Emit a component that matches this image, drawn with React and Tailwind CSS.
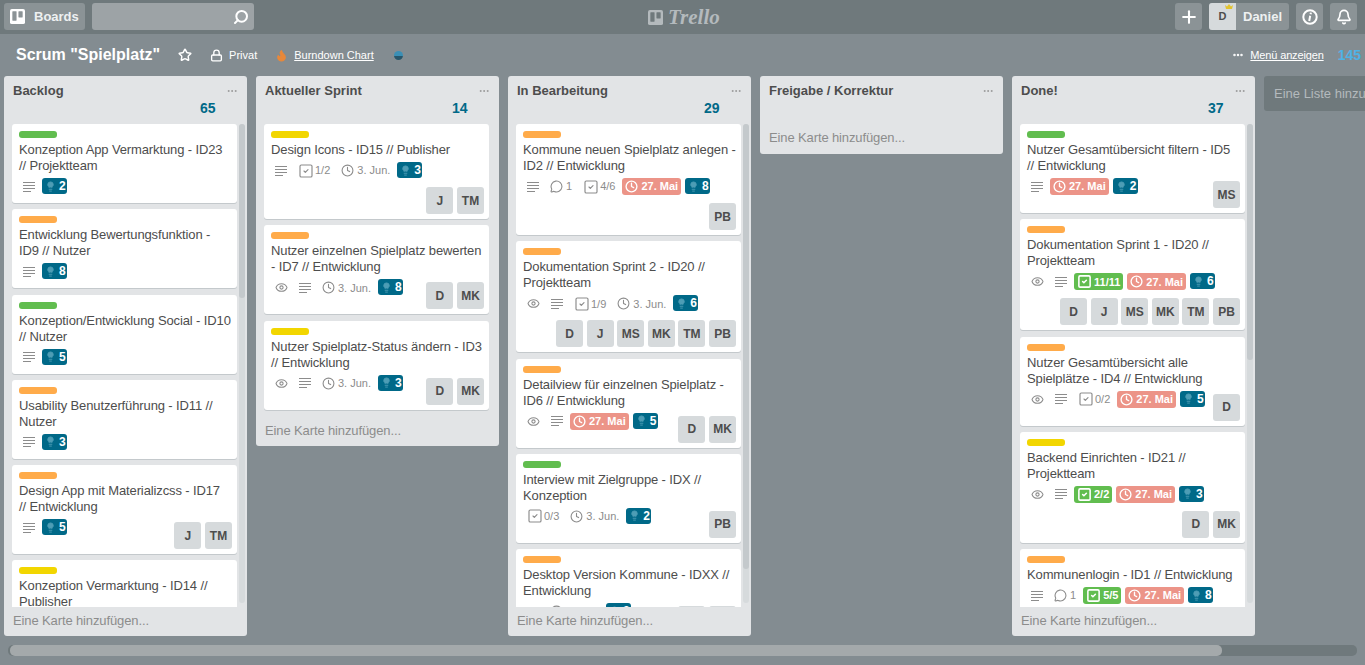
import { Search, Plus, Bell, Star, Lock, Flame, Eye, MessageCircle, SquareCheck, Clock, Lightbulb, Ellipsis } from "lucide-react";

const ORANGE = "bg-[#ffab4a]";
const GREEN = "bg-[#61bd4f]";
const YELLOW = "bg-[#f2d600]";

const lists = [
  {
    title: "Backlog",
    count: 65,
    thumb: "h-[174px]",
    cards: [
      { label: GREEN, title: "Konzeption App Vermarktung - ID23\n// Projektteam", badges: [["desc"], ["bulb", 2]] },
      { label: ORANGE, title: "Entwicklung Bewertungsfunktion - ID9 // Nutzer", badges: [["desc"], ["bulb", 8]] },
      { label: GREEN, title: "Konzeption/Entwicklung Social - ID10 // Nutzer", badges: [["desc"], ["bulb", 5]] },
      { label: ORANGE, title: "Usability Benutzerführung - ID11 // Nutzer", badges: [["desc"], ["bulb", 3]] },
      { label: ORANGE, title: "Design App mit Materializcss - ID17\n// Entwicklung", badges: [["desc"], ["bulb", 5]], members: ["J", "TM"] },
      { label: YELLOW, title: "Konzeption Vermarktung - ID14 // Publisher", badges: [["desc"], ["bulb", 2]] },
    ],
  },
  {
    title: "Aktueller Sprint",
    count: 14,
    cards: [
      { label: YELLOW, title: "Design Icons - ID15 // Publisher", badges: [["desc"], ["check", "1/2"], ["due", "3. Jun."], ["bulb", 3]], members: ["J", "TM"] },
      { label: ORANGE, title: "Nutzer einzelnen Spielplatz bewerten - ID7 // Entwicklung", badges: [["eye"], ["desc"], ["due", "3. Jun."], ["bulb", 8]], members: ["D", "MK"] },
      { label: YELLOW, title: "Nutzer Spielplatz-Status ändern - ID3 // Entwicklung", badges: [["eye"], ["desc"], ["due", "3. Jun."], ["bulb", 3]], members: ["D", "MK"] },
    ],
  },
  {
    title: "In Bearbeitung",
    count: 29,
    thumb: "h-[445px]",
    cards: [
      { label: ORANGE, title: "Kommune neuen Spielplatz anlegen - ID2 // Entwicklung", badges: [["desc"], ["comment", "1"], ["check", "4/6"], ["late", "27. Mai"], ["bulb", 8]], members: ["PB"] },
      { label: ORANGE, title: "Dokumentation Sprint 2 - ID20 // Projektteam", badges: [["eye"], ["desc"], ["check", "1/9"], ["due", "3. Jun."], ["bulb", 6]], members: ["D", "J", "MS", "MK", "TM", "PB"] },
      { label: ORANGE, title: "Detailview für einzelnen Spielplatz - ID6 // Entwicklung", badges: [["eye"], ["desc"], ["late", "27. Mai"], ["bulb", 5]], members: ["D", "MK"] },
      { label: GREEN, title: "Interview mit Zielgruppe - IDX // Konzeption", badges: [["check", "0/3"], ["due", "3. Jun."], ["bulb", 2]], members: ["PB"] },
      { label: ORANGE, title: "Desktop Version Kommune - IDXX // Entwicklung", badges: [["desc"], ["due", "3. Jun."], ["bulb", 3]], members: ["D", "MK"] },
    ],
  },
  {
    title: "Freigabe / Korrektur",
    cards: [],
  },
  {
    title: "Done!",
    count: 37,
    thumb: "h-[236px]",
    cards: [
      { label: GREEN, title: "Nutzer Gesamtübersicht filtern - ID5\n// Entwicklung", badges: [["desc"], ["late", "27. Mai"], ["bulb", 2]], members: ["MS"] },
      { label: ORANGE, title: "Dokumentation Sprint 1 - ID20 // Projektteam", badges: [["eye"], ["desc"], ["done", "11/11"], ["late", "27. Mai"], ["bulb", 6]], members: ["D", "J", "MS", "MK", "TM", "PB"] },
      { label: ORANGE, title: "Nutzer Gesamtübersicht alle Spielplätze - ID4 // Entwicklung", badges: [["eye"], ["desc"], ["check", "0/2"], ["late", "27. Mai"], ["bulb", 5]], members: ["D"] },
      { label: YELLOW, title: "Backend Einrichten - ID21 // Projektteam", badges: [["eye"], ["desc"], ["done", "2/2"], ["late", "27. Mai"], ["bulb", 3]], members: ["D", "MK"] },
      { label: ORANGE, title: "Kommunenlogin - ID1 // Entwicklung", badges: [["desc"], ["comment", "1"], ["done", "5/5"], ["late", "27. Mai"], ["bulb", 8]], members: ["D", "MK"] },
    ],
  },
];

function TrelloMark({ className, bar }) {
  return (
    <svg viewBox="0 0 16 16" className={className}>
      <rect width="16" height="16" rx="2" fill="currentColor" />
      <rect x="2.5" y="2.5" width="4.5" height="10" rx="0.5" fill={bar} />
      <rect x="9" y="2.5" width="4.5" height="6.5" rx="0.5" fill={bar} />
    </svg>
  );
}

function DescIcon() {
  return (
    <svg viewBox="0 0 12 12" className="w-[12px] h-[12px] text-[#8c8c8c]">
      <path d="M0 1.5h12M0 4.5h12M0 7.5h12M0 10.5h8" stroke="currentColor" strokeWidth="1.2" />
    </svg>
  );
}

function Badge({ type, value }) {
  if (type === "desc") {
    return <div className="flex items-center h-[17px] px-[4px] mr-[3px]"><DescIcon /></div>;
  }
  if (type === "bulb") {
    return (
      <div className="flex items-center h-[16px] w-[25px] pl-[3px] gap-[3px] mr-[4px] rounded-[3px] bg-[#006988] text-white text-[12px] font-bold">
        <Lightbulb size={11} strokeWidth={2} className="text-[#4d9db5] fill-[#4d9db5] shrink-0" />
        {value}
      </div>
    );
  }
  if (type === "late") {
    return (
      <div className="flex items-center h-[17px] px-[3px] gap-[3px] mr-[4px] rounded-[3px] bg-[#ec9488] text-white text-[11px] font-bold">
        <Clock size={13} strokeWidth={2.5} />
        {value}
      </div>
    );
  }
  if (type === "done") {
    return (
      <div className="flex items-center h-[17px] px-[3px] gap-[2px] mr-[4px] rounded-[3px] bg-[#61bd4f] text-white text-[11px] font-bold">
        <SquareCheck size={15} strokeWidth={2.5} />
        {value}
      </div>
    );
  }
  if (type === "check") {
    return (
      <div className="flex items-center h-[17px] px-[4px] gap-[1px] mr-[3px] text-[#8c8c8c] text-[11px]">
        <SquareCheck size={16} strokeWidth={1.75} />
        {value}
      </div>
    );
  }
  const Icon = { eye: Eye, comment: MessageCircle, due: Clock }[type];
  return (
    <div className="flex items-center h-[17px] px-[4px] gap-[3px] mr-[3px] text-[#8c8c8c] text-[11px]">
      <Icon size={13} strokeWidth={2} />
      {value}
    </div>
  );
}

function Card({ card }) {
  return (
    <div className="shrink-0 flow-root bg-white rounded-[3px] shadow-[0_1px_0_#c4c9cc] px-[7px] pt-[7px] pb-[3px]">
      <div className={`w-[38px] h-[7px] rounded-[3px] mb-[4px] ${card.label}`} />
      <div className="-mr-[3px] whitespace-pre-line text-[13px] tracking-[-0.12px] leading-[16px] text-[#4d4d4d] mb-[4px]">{card.title}</div>
      <div className="float-left flex mb-[5px]">
        {card.badges.map(([type, value]) => (
          <Badge key={type} type={type} value={value} />
        ))}
      </div>
      {card.members && (
        <div className="float-right flex mt-[3px] mb-[2px] -mr-[2px]">
          {card.members.map(m => (
            <div key={m} className="w-[27px] h-[27px] ml-[3.6px] rounded-[3px] bg-[#d6dadc] text-[#4d4d4d] text-[12px] font-bold flex items-center justify-center">
              {m}
            </div>
          ))}
        </div>
      )}
    </div>
  );
}

function List({ list }) {
  const hasCards = list.cards.length > 0;
  return (
    <div className="w-[243px] shrink-0 max-h-[560px] flex flex-col bg-[#e2e4e6] rounded-[3px]">
      <div className="shrink-0 h-[46px] pt-[7px] pl-[9px] pr-[9px]">
        <div className="flex justify-between items-center">
          <h2 className="text-[13px] leading-[16px] font-bold text-[#4d4d4d]">{list.title}</h2>
          <Ellipsis size={12} className="text-[#999]" />
        </div>
        {list.count && (
          <div className="mt-[1px] pl-[187px] text-[14px] leading-[16px] font-bold text-[#006988]">{list.count}</div>
        )}
      </div>
      {hasCards && (
        <div className="flex min-h-0 pl-[8px] pt-[2px]">
          <div className="w-[225px] pb-[7.5px] flex flex-col gap-[6.25px] overflow-hidden">
            {list.cards.map(c => <Card key={c.title} card={c} />)}
          </div>
          {list.thumb && (
            <div className="w-[6px] ml-[2px] mb-[4px] rounded-[3px] bg-[#d6dadc]">
              <div className={`w-[6px] rounded-[3px] bg-[#c4c9cc] ${list.thumb}`} />
            </div>
          )}
        </div>
      )}
      <div className={`shrink-0 flex items-center pl-[9px] text-[13px] tracking-[-0.12px] text-[#8c8c8c] ${hasCards ? "h-[29px] pb-[1px]" : "h-[32px]"}`}>
        Eine Karte hinzufügen...
      </div>
    </div>
  );
}

function HeaderButton({ children }) {
  return (
    <div className="w-[27px] h-[27px] rounded-[3px] bg-[#8b9396] flex items-center justify-center text-white">
      {children}
    </div>
  );
}

export default function App() {
  return (
    <div className="w-[1365px] h-[665px] overflow-hidden flex flex-col bg-[#838c91] font-['Liberation_Sans',Arial,sans-serif]">
      <header className="shrink-0 h-[34px] px-[4px] pt-[3px] flex items-start bg-[#6f797c]">
        <div className="w-[81px] h-[27px] rounded-[3px] bg-[#8b9396] flex items-center pl-[6px] gap-[9px] text-[13px] font-bold">
          <TrelloMark className="w-[15px] h-[15px] text-white" bar="#8b9396" />
          <span className="text-[#eef0f1]">Boards</span>
        </div>
        <div className="ml-[7px] w-[162px] h-[27px] rounded-[3px] bg-[#9da3a6] flex items-center justify-end pr-[5px]">
          <Search size={16} strokeWidth={3} className="text-white -scale-x-100" />
        </div>
        <div className="ml-[394px] mt-[6px] flex items-center text-[#b4babd]">
          <TrelloMark className="w-[15px] h-[15px]" bar="#6f797c" />
          <span className="ml-[5px] text-[21px] leading-[16px] italic font-['Liberation_Serif',serif] font-bold">Trello</span>
        </div>
        <div className="ml-auto flex items-center gap-[7px] pr-[3px] -translate-x-px">
          <HeaderButton><Plus size={20} strokeWidth={2.5} /></HeaderButton>
          <div className="w-[80px] h-[27px] rounded-[3px] bg-[#8b9396] flex items-center relative">
            <div className="w-[27px] h-[27px] rounded-l-[3px] bg-[#d6dadc] text-[#4d4d4d] text-[11px] font-bold flex items-center justify-center">D</div>
            <svg viewBox="0 0 8 5" className="absolute left-[16px] top-[1px] w-[8px] h-[5px]">
              <path d="M0 1l2 1.5L4 0l2 2.5L8 1 7 5H1z" fill="#e2c32f" />
            </svg>
            <span className="ml-[7px] text-[13px] font-bold text-[#eef0f1]">Daniel</span>
          </div>
          <HeaderButton>
            <svg viewBox="0 0 16 16" className="w-[16px] h-[16px]">
              <circle cx="8" cy="8" r="6.7" fill="none" stroke="currentColor" strokeWidth="2" />
              <path d="M8.9 3.6l-.3 1.6M8.2 6.8L7.2 12" stroke="currentColor" strokeWidth="2" fill="none" />
            </svg>
          </HeaderButton>
          <HeaderButton><Bell size={16} strokeWidth={2.5} /></HeaderButton>
        </div>
      </header>

      <div className="shrink-0 h-[42px] pl-[16px] pr-[4px] flex items-center text-white text-[11px]">
        <h1 className="text-[16px] font-bold">Scrum "Spielplatz"</h1>
        <Star size={14} strokeWidth={2.5} className="ml-[18px]" />
        <Lock size={13} strokeWidth={2.5} className="ml-[18px]" />
        <span className="ml-[6px]">Privat</span>
        <Flame size={13} className="ml-[18px] text-[#e8883a] fill-[#e8883a]" />
        <span className="ml-[6px] underline">Burndown Chart</span>
        <div className="ml-[20px] w-[9px] h-[9px] rounded-full bg-[linear-gradient(#3a8fb5_55%,#27566b_55%)]" />
        <Ellipsis size={12} strokeWidth={3} className="ml-auto" />
        <span className="ml-[6px] underline tracking-[-0.15px]">Menü anzeigen</span>
        <span className="ml-[14px] text-[14px] font-bold text-[#4eb2e5]">145</span>
      </div>

      <div className="shrink-0 h-[560px] pl-[4px] flex items-start gap-[9px] overflow-hidden">
        {lists.map(list => <List key={list.title} list={list} />)}
        <div className="w-[243px] shrink-0 h-[35px] rounded-[3px] bg-[#6f797c] pl-[10px] flex items-center text-[13px] text-[#b4babd]">
          Eine Liste hinzufügen...
        </div>
      </div>

      <div className="mt-[9px] mx-[8px] w-[1349px] h-[11px] rounded-[5px] bg-[#6f797c] pl-[2px]">
        <div className="w-[1212px] h-[11px] rounded-[5px] bg-[#a4a9ab]" />
      </div>
    </div>
  );
}
